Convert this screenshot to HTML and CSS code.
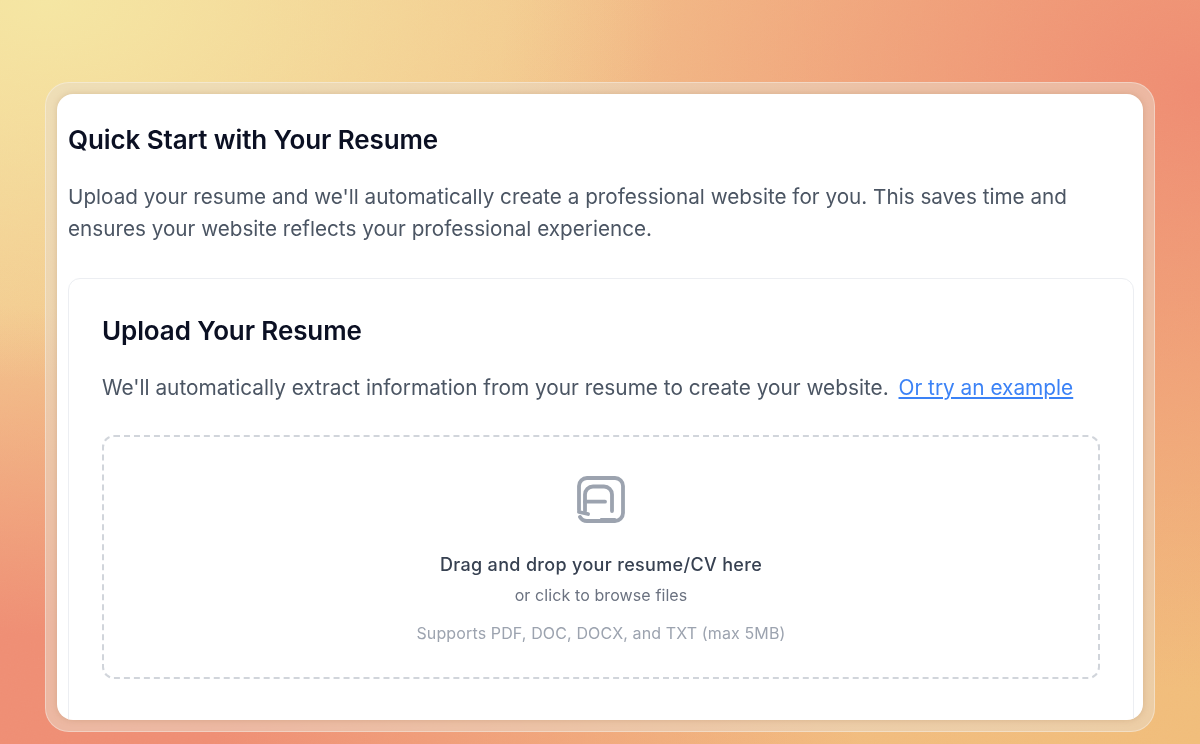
FILE: index.html
```html
<!DOCTYPE html>
<html lang="en">
<head>
  <meta charset="UTF-8">
  <title>Quick Start with Your Resume</title>
  <link rel="stylesheet" href="styles.css">
</head>
<body>
  <svg class="grain" width="1200" height="744">
    <filter id="grain-noise">
      <feTurbulence type="fractalNoise" baseFrequency="0.7" numOctaves="2"/>
      <feColorMatrix type="saturate" values="0"/>
    </filter>
    <rect width="1200" height="744" filter="url(#grain-noise)"/>
  </svg>

  <div class="frame">
    <div class="window">
      <h1 class="title">Quick Start with Your Resume</h1>
      <p class="intro">Upload your resume and we'll automatically create a professional website for you. This saves time and ensures your website reflects your professional experience.</p>

      <div class="upload-card">
        <h2 class="upload-title">Upload Your Resume</h2>
        <p class="upload-desc">We'll automatically extract information from your resume to create your website. <a href="#" class="example-link">Or try an example</a></p>

        <div class="dropzone">
          <svg class="drop-icon" viewBox="0 0 48 48" fill="none" stroke="currentColor" stroke-width="3.800" stroke-linecap="round" stroke-linejoin="round">
            <path d="M2 34V10a8 8 0 0 1 8-8h28a8 8 0 0 1 8 8v27a8 8 0 0 1-8 8H10a8 8 0 0 1-7-4"/>
            <path d="M2 36l9 2"/>
            <path d="M8 35V18.500a8 8 0 0 1 8-8h11a8 8 0 0 1 8 8V35"/>
            <path d="M8 25.700h20"/>
            <path d="M24 43h14" stroke-width="2"/>
          </svg>
          <p class="drop-main">Drag and drop your resume/CV here</p>
          <p class="drop-sub">or click to browse files</p>
          <p class="drop-note">Supports PDF, DOC, DOCX, and TXT (max 5MB)</p>
        </div>
      </div>
    </div>
  </div>
</body>
</html>
```

FILE: styles.css
```css
* {
  box-sizing: border-box;
}
html, body {
  margin: 0;
  height: 100%;
}
body {
  position: relative;
  height: 744px;
  overflow: hidden;
  padding: 82px 45px 12px;
  font-family: Inter, "Liberation Sans", sans-serif;
  background:
    radial-gradient(ellipse 620px 380px at 4% 0%, #f5e6a2 0%, #f5dd9f00 100%),
    radial-gradient(ellipse 700px 600px at 100% 12%, #ef8c72 0%, #ef8c7200 100%),
    radial-gradient(ellipse 860px 440px at 0% 100%, #ef8e74 0%, #ef8e74 25%, #ef8e7400 100%),
    linear-gradient(135deg, #f3cd92 0%, #f2bb84 60%, #f1bd7a 100%);
}
.grain {
  position: absolute;
  top: 0;
  left: 0;
  opacity: 0.1;
  mix-blend-mode: soft-light;
}
.frame {
  position: relative;
  height: 650px;
  padding: 11px;
  border: 1px solid #ffffff55;
  border-radius: 24px;
  background: #e8dccb88;
}
.window {
  height: 626px;
  overflow: hidden;
  padding: 27px 9px 0 11px;
  border-radius: 16px;
  background: #fff;
  box-shadow: 0 0 6px #a0704044;
}
.title {
  margin: 0;
  font-size: 26px;
  line-height: 38px;
  font-weight: 600;
  letter-spacing: -0.1px;
  color: #0b1023;
}
.intro {
  margin: 22px 0 33px;
  font-size: 20.7px;
  line-height: 32px;
  color: #4b5563;
}
.upload-card {
  height: 500px;
  padding: 33px 33px 0;
  border: 1px solid #eceef2;
  border-radius: 12px;
}
.upload-title {
  margin: 0;
  font-size: 26px;
  line-height: 38px;
  font-weight: 600;
  letter-spacing: -0.1px;
  color: #0b1023;
}
.upload-desc {
  margin: 22px 0 31px;
  font-size: 20.8px;
  line-height: 32px;
  color: #4b5563;
}
.example-link {
  margin-left: 4px;
  color: #3b82f6;
}
.dropzone {
  height: 244px;
  padding-top: 39px;
  text-align: center;
  border: 2px dashed #d1d5db;
  border-radius: 12px;
}
.drop-icon {
  display: block;
  width: 48px;
  height: 48px;
  margin: 0 auto 27px;
  color: #9ca3af;
}
.drop-main {
  margin: 0;
  font-size: 18px;
  line-height: 28px;
  font-weight: 500;
  letter-spacing: 0.33px;
  color: #374151;
}
.drop-sub {
  margin: 4px 0 0;
  font-size: 16px;
  line-height: 24px;
  letter-spacing: 0.1px;
  color: #6b7280;
}
.drop-note {
  margin: 14px 0 0;
  font-size: 16px;
  line-height: 24px;
  letter-spacing: 0.13px;
  color: #9ca3af;
}
```
